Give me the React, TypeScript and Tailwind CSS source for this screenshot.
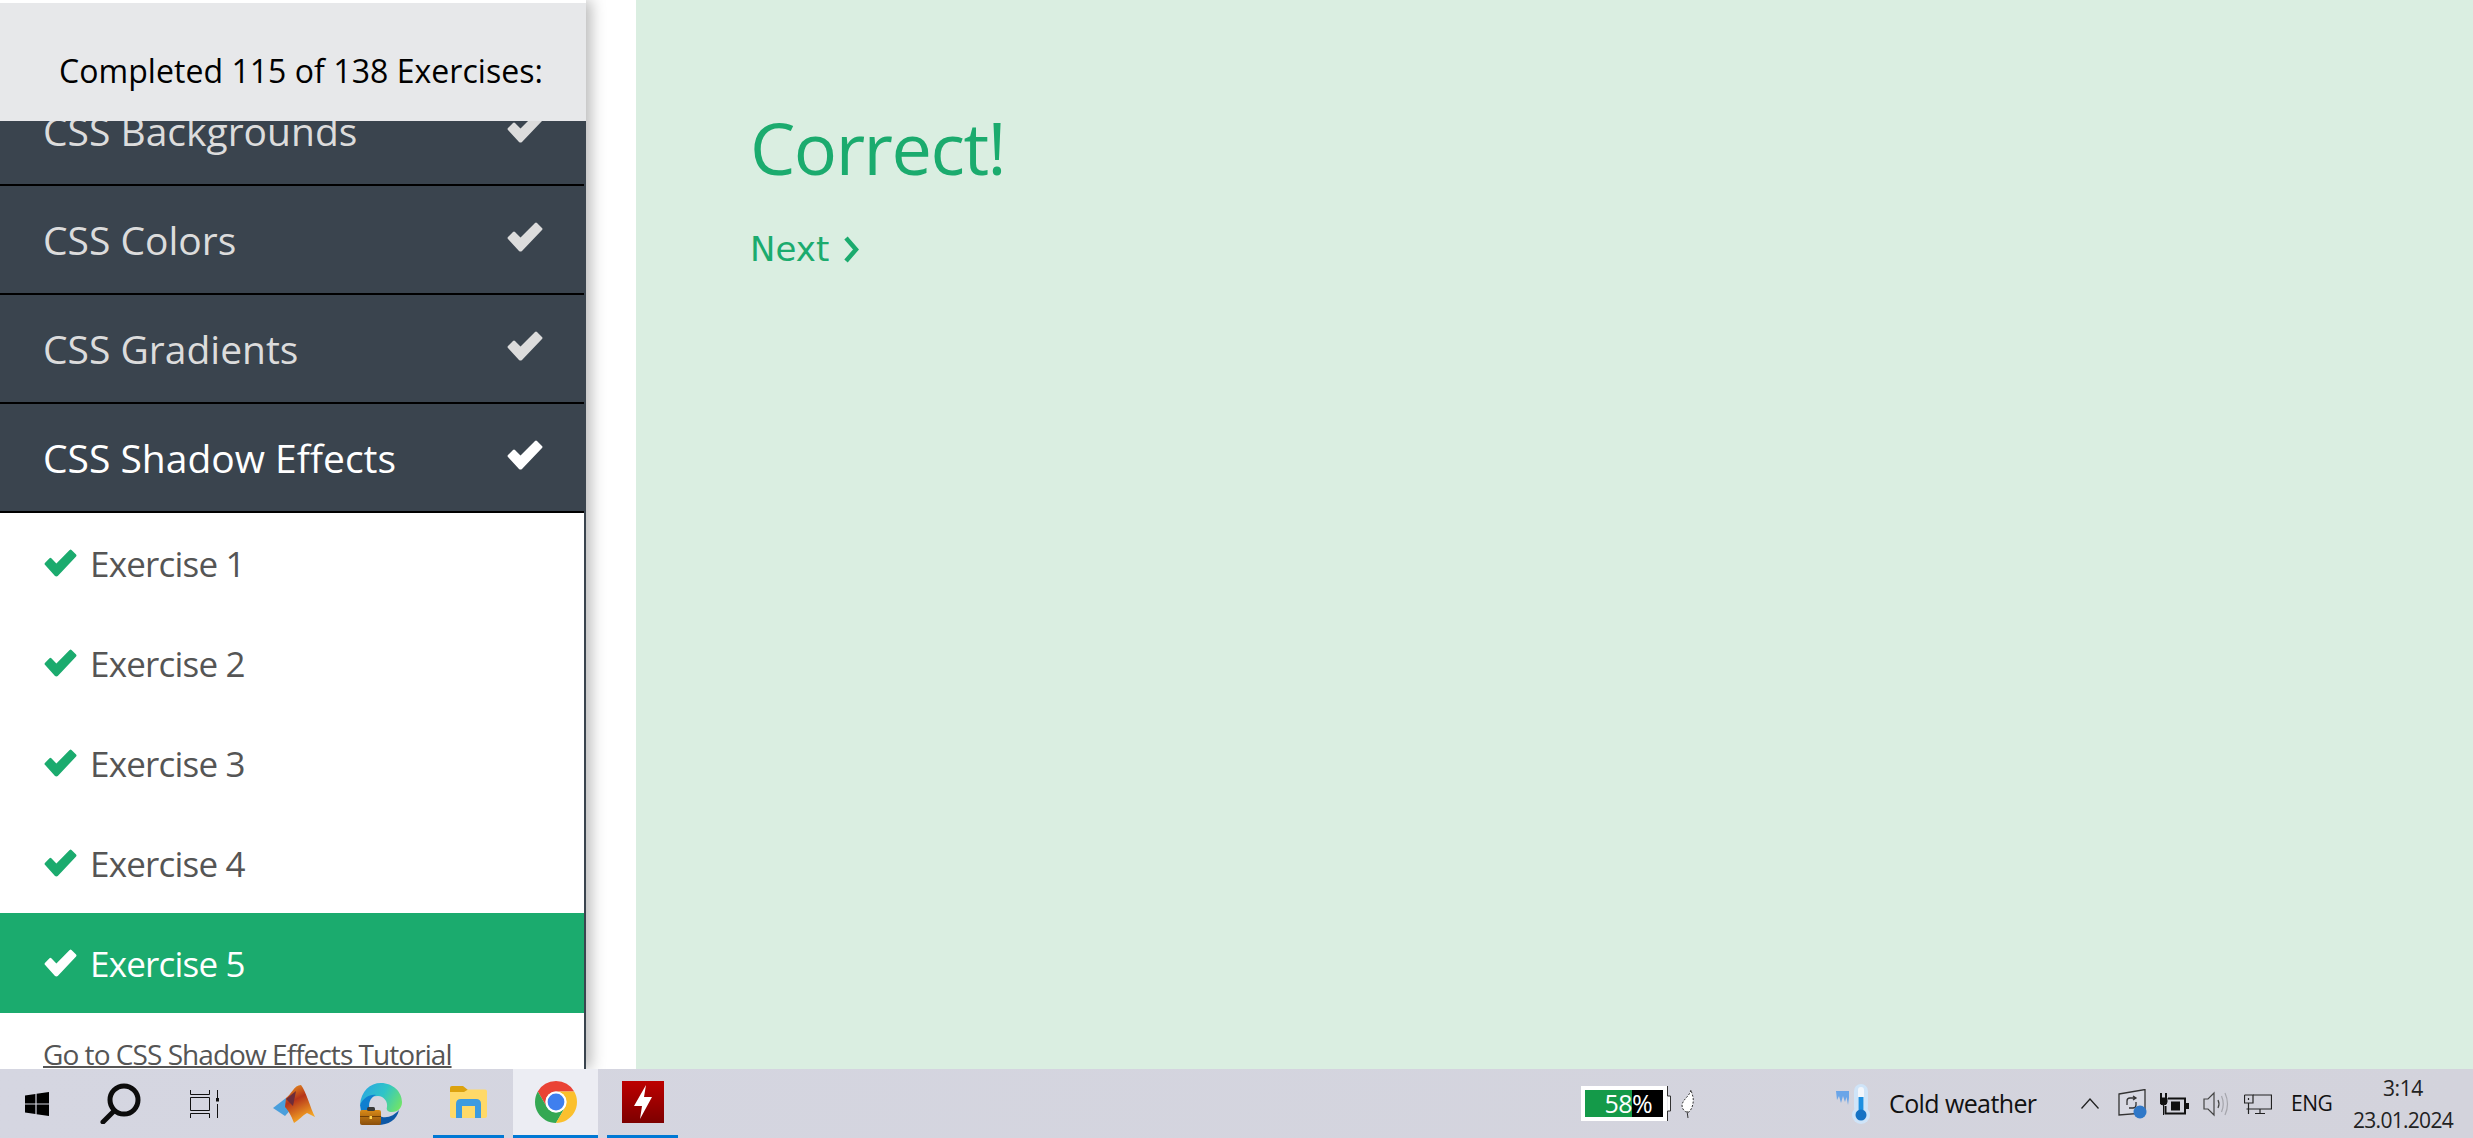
const seg = { fontFamily: '"Open Sans","Noto Sans",sans-serif' };

function Check({ className }: { className: string }) {
  return (
    <svg viewBox="0 0 36 30" preserveAspectRatio="none" fill="currentColor" className={className}>
      <path d="M1 17 Q0 16 1 15 L6 10 Q7 9 8 10 L13.5 15.5 L28 1 Q29 0 30 1 L35 6 Q36 7 35 8 L15 29 Q13.5 30 12 29z" />
    </svg>
  );
}

function Topic({ name, active }: { name: string; active?: boolean }) {
  return (
    <div className="flex h-[109px] items-center justify-between border-b-2 border-black bg-[#3a444e] pl-[43px] pr-[41px]">
      <span className={`text-[39px] leading-none ${active ? "text-white" : "text-[#dcdcdc]"}`}>{name}</span>
      <Check className={`mb-[6px] h-[30px] w-[36px] ${active ? "text-white" : "text-[#dcdcdc]"}`} />
    </div>
  );
}

function Exercise({ n, active }: { n: number; active?: boolean }) {
  return (
    <div className={`flex h-[100px] items-center pl-[44px] ${active ? "bg-[#1bab6e] text-white" : "bg-white text-[#555]"}`}>
      <Check className={`h-[28px] w-[33px] ${active ? "text-white" : "text-[#1bab6e]"}`} />
      <span className="ml-[13px] text-[35px] leading-none tracking-[-0.8px]">Exercise {n}</span>
    </div>
  );
}

function Matlab() {
  return (
    <svg width="42" height="38" viewBox="0 0 42 38">
      <defs>
        <linearGradient id="ml" x1="0" y1="0" x2="0.4" y2="1">
          <stop offset="0" stopColor="#f0a020" />
          <stop offset="0.45" stopColor="#b5341a" />
          <stop offset="1" stopColor="#f5a623" />
        </linearGradient>
      </defs>
      <path d="M0 23 L13 13 L22 20 L12 31z" fill="#4a9fdc" />
      <path d="M13 13 C18 10 21 0 28 0 C33 6 37 22 42 32 L34 28 C30 30 26 35 21 38 C18 30 15 25 12 22z" fill="url(#ml)" />
      <path d="M13 14 L23 6 L20 21z" fill="#6d2c3a" />
    </svg>
  );
}

function Edge() {
  return (
    <svg width="42" height="42" viewBox="0 0 42 42">
      <defs>
        <linearGradient id="eg" x1="0" y1="0.3" x2="1" y2="0.7">
          <stop offset="0" stopColor="#2aa8e0" />
          <stop offset="0.5" stopColor="#2fc4c8" />
          <stop offset="1" stopColor="#6fe36a" />
        </linearGradient>
        <linearGradient id="bc" x1="0" y1="0" x2="0" y2="1">
          <stop offset="0" stopColor="#d98a17" />
          <stop offset="1" stopColor="#8a4f0c" />
        </linearGradient>
      </defs>
      <path d="M0 22 C1 8 10 0 21 0 C33 0 42 9 42 19 C42 25 38 29 32 29 C28 29 26 27 27 24 C28 19 24 13 18 13 C9 13 3 18 0 22z" fill="url(#eg)" />
      <path d="M0 22 C3 15 10 11 16 12 C9 15 8 22 10 28 L1 28z" fill="#0f7fd0" />
      <path d="M18 32 C25 37 34 33 39 27 C37 37 28 42 18 42z" fill="#0d58a6" />
      <rect x="0" y="27" width="21" height="15" rx="2" fill="url(#bc)" />
      <rect x="7" y="24" width="8" height="4" rx="1.5" fill="#3a3a3a" />
      <rect x="0" y="33" width="21" height="1" fill="#6e3f08" />
      <rect x="9.5" y="33" width="2.5" height="3" fill="#ffd34d" />
    </svg>
  );
}

function Explorer() {
  return (
    <svg width="37" height="32" viewBox="0 0 37 32">
      <path d="M0 2 Q0 0 2 0 H13 L18 4 V8 H0z" fill="#dca20e" />
      <path d="M0 6 H14 L18 3.5 H35 Q37 3.5 37 5.5 V30 Q37 32 35 32 H2 Q0 32 0 30z" fill="#ffd968" />
      <path d="M6 32 V18 Q6 13 11 13 H26 Q31 13 31 18 V32 H25 V20 H12 V32z" fill="#3d9be0" />
    </svg>
  );
}

function Chrome() {
  return (
    <svg width="42" height="42" viewBox="4 4 40 40">
      <path d="M24 4A20 20 0 0 1 41.32 14H24A10 10 0 0 0 15.34 29L6.68 14A20 20 0 0 1 24 4z" fill="#ea4335" />
      <path d="M6.68 14A20 20 0 0 0 24 44L32.66 29A10 10 0 0 1 15.34 29z" fill="#34a853" />
      <path d="M41.32 14A20 20 0 0 1 24 44L32.66 29A10 10 0 0 0 24 14z" fill="#fbc02d" />
      <circle cx="24" cy="24" r="10" fill="#fff" />
      <circle cx="24" cy="24" r="8" fill="#3f7fee" />
    </svg>
  );
}

function Flash() {
  return (
    <svg width="42" height="42" viewBox="0 0 42 42">
      <defs>
        <linearGradient id="fl" x1="0" y1="0" x2="0" y2="1">
          <stop offset="0" stopColor="#bd0000" />
          <stop offset="1" stopColor="#7d0000" />
        </linearGradient>
      </defs>
      <rect width="42" height="42" fill="url(#fl)" />
      <path d="M24 4 L12 25 H20 L18 38 L30 16 H22z" fill="#fff" />
    </svg>
  );
}

function Thermo() {
  return (
    <svg width="40" height="40" viewBox="0 0 40 40">
      <path d="M1 7 H14 V14 L13 21 L11.5 13 L10 18 L8 12 L6 19 L4 12 L2 16z" fill="#6aa5e8" />
      <rect x="19" y="0" width="14" height="30" rx="7" fill="#cfe4f8" />
      <circle cx="26" cy="31" r="9" fill="#cfe4f8" />
      <rect x="23" y="3" width="6" height="26" rx="3" fill="#f2f6fb" />
      <rect x="23.5" y="13" width="5" height="17" fill="#1c8fe0" />
      <circle cx="26" cy="31" r="5.5" fill="#1472c4" />
    </svg>
  );
}

export default function App() {
  return (
    <div className="flex h-[1138px] w-[2473px] flex-col overflow-hidden bg-white" style={seg}>
      <div className="flex h-[1069px] min-h-0">
        <aside className="relative z-10 h-full w-[586px] shrink-0 bg-white pt-[3px] shadow-[5px_0_14px_rgba(0,0,0,0.28)]">
          <div className="relative z-10 flex h-[118px] items-center bg-[#e7e8ea] pl-[59px] pt-[18px]">
            <span className="text-[32px] leading-none tracking-[0.05px] text-black">Completed 115 of 138 Exercises:</span>
          </div>
          <div className="-mt-[44px] h-[992px] overflow-hidden border-r-2 border-[#3a444e]">
            <Topic name="CSS Backgrounds" />
            <Topic name="CSS Colors" />
            <Topic name="CSS Gradients" />
            <Topic name="CSS Shadow Effects" active />
            <Exercise n={1} />
            <Exercise n={2} />
            <Exercise n={3} />
            <Exercise n={4} />
            <Exercise n={5} active />
            <div className="pl-[43px] pt-[22px]">
              <span className="text-[28px] leading-[38px] tracking-[-0.95px] text-[#555] underline decoration-2 underline-offset-[1px]">Go to CSS Shadow Effects Tutorial</span>
            </div>
          </div>
        </aside>
        <main className="ml-[50px] flex-1 bg-[#daeee1] pl-[114px] pt-[99px]">
          <h1 className="text-[72px] font-normal leading-[97px] tracking-[-1.5px] text-[#1bab6e]">Correct!</h1>
          <div className="mt-[33px] flex items-center text-[#1bab6e]" style={{ fontFamily: '"DejaVu Sans",sans-serif' }}>
            <span className="text-[34px] leading-[40px]">Next</span>
            <svg className="ml-[15px]" width="15" height="27" viewBox="0 0 15 27">
              <path d="M2 2 L12 13.5 L2 25" fill="none" stroke="currentColor" strokeWidth="4.5" />
            </svg>
          </div>
        </main>
      </div>

      <footer className="relative z-20 flex h-[69px] items-stretch bg-gradient-to-r from-[#d5d6e1] to-[#d3d3dc] text-[#111]">
        <div className="flex w-[90px] items-center pl-[25px]">
          <svg width="24" height="24" viewBox="0 0 24 24">
            <path d="M0 3.4 L10.4 2 V11.4 H0z M11.6 1.8 L24 0 V11.4 H11.6z M0 12.6 H10.4 V22 L0 20.6z M11.6 12.6 H24 V24 L11.6 22.2z" fill="#000" />
          </svg>
        </div>
        <div className="flex w-[90px] items-center pl-[10px]">
          <svg width="41" height="41" viewBox="0 0 41 41">
            <circle cx="24" cy="17" r="14" fill="none" stroke="#0c0c0c" strokeWidth="5" />
            <path d="M14 28 L3 39" stroke="#0c0c0c" strokeWidth="5" strokeLinecap="round" />
          </svg>
        </div>
        <div className="flex w-[93px] items-center pl-[10px]">
          <svg width="30" height="28" viewBox="0 0 30 28">
            <path d="M0.5 0 V4.5 H19.5 V0 M0.5 7.5 H19.5 V20.5 H0.5z M0.5 28 V23.5 H19.5 V28 M27.5 0 V10 M27.5 14 V28" fill="none" stroke="#111" strokeWidth="1" />
            <rect x="26" y="8" width="3" height="3.5" fill="#111" />
          </svg>
        </div>
        <div className="flex w-[87px] items-center">
          <Matlab />
        </div>
        <div className="flex w-[73px] items-center">
          <Edge />
        </div>
        <div className="flex w-[71px] items-center justify-center border-b-[3px] border-[#0078d4]">
          <Explorer />
        </div>
        <div className="ml-[9px] flex w-[85px] items-center justify-center border-b-[3px] border-[#0078d4] bg-[#ecedf3]">
          <Chrome />
        </div>
        <div className="ml-[9px] flex w-[71px] items-center justify-center border-b-[3px] border-[#0078d4]">
          <Flash />
        </div>

        <div className="ml-[903px] flex w-[100px] items-center">
          <div className="flex h-[35px] w-[86px] border-[4px] border-white bg-black text-[25px] leading-[27px] text-white">
            <div className="flex h-full w-[47px] justify-end bg-[#149a49]"><span className="tracking-[-0.5px]">58</span></div>
            <span className="tracking-[-0.5px]">%</span>
          </div>
          <svg width="14" height="35" viewBox="0 0 14 35">
            <path d="M0.5 0 V10 H3.5 V25 H0.5 V35" fill="#fff" stroke="#333" strokeWidth="1" />
          </svg>
        </div>
        <div className="flex w-[154px] items-center">
          <svg width="14" height="30" viewBox="0 0 14 30">
            <path d="M10 1 C8 8 2 10 1 16 C1 22 6 24 8 23 C11 20 13 14 12 8z" fill="#fff" stroke="#333" strokeWidth="1" strokeDasharray="2 1.5" />
            <path d="M6 22 L7 29" stroke="#333" strokeWidth="1" />
          </svg>
        </div>
        <div className="flex w-[246px] items-center">
          <Thermo />
          <span className="ml-[14px] text-[25px] leading-none tracking-[-0.6px]">Cold weather</span>
        </div>
        <div className="flex w-[37px] items-center">
          <svg width="18" height="11" viewBox="0 0 18 11">
            <path d="M0.5 10.5 L9 1 L17.5 10.5" fill="none" stroke="#222" strokeWidth="1.3" />
          </svg>
        </div>
        <div className="flex w-[42px] items-center">
          <svg width="30" height="30" viewBox="0 0 30 30">
            <path d="M1 5 L27 0.5 V24 L1 26z" fill="#d8d9e2" stroke="#333" strokeWidth="1.3" />
            <path d="M9 16 V12 Q9 9 12 9 H17 M15 7 L18 9 L15 11 M18 13 V16 Q18 19 15 19 H11" fill="none" stroke="#333" strokeWidth="1.3" />
            <circle cx="22" cy="23" r="6.5" fill="#2f78c8" />
          </svg>
        </div>
        <div className="flex w-[43px] items-center">
          <svg width="30" height="22" viewBox="0 0 30 22">
            <path d="M1 0 V5 M6 0 V5" stroke="#111" strokeWidth="2" />
            <path d="M0 5 H7 V9 Q7 12 3.5 12 Q0 12 0 9z M3.5 12 V22" fill="#111" stroke="#111" strokeWidth="1" />
            <path d="M8 5.5 H25 V20.5 H5.5 V13" fill="none" stroke="#111" strokeWidth="2" />
            <rect x="11" y="8.5" width="9" height="9" fill="#111" />
            <rect x="26" y="10" width="3" height="6" fill="#111" />
          </svg>
        </div>
        <div className="flex w-[41px] items-center">
          <svg width="27" height="26" viewBox="0 0 27 26">
            <path d="M1 8 H5 L11 2 V24 L5 18 H1z" fill="none" stroke="#444" strokeWidth="1.2" />
            <path d="M15 9 Q17 13 15 17" fill="none" stroke="#444" strokeWidth="1.2" />
            <path d="M18.5 5 Q22 13 18.5 21 M22 2 Q27 13 22 24" fill="none" stroke="#a5a5ac" strokeWidth="1.2" />
          </svg>
        </div>
        <div className="flex w-[47px] items-center">
          <svg width="28" height="20" viewBox="0 0 28 20">
            <path d="M9 1 H27.5 V15 H2.5" fill="none" stroke="#222" strokeWidth="1.2" />
            <path d="M0.5 1 H9 V9 H0.5 V1 M4.5 9 V20 M4.5 4 V6 M11 19.5 H21 M16 15 V19.5" fill="none" stroke="#222" strokeWidth="1.2" />
          </svg>
        </div>
        <div className="flex w-[62px] items-center">
          <span className="text-[21px] leading-none tracking-[-0.5px]">ENG</span>
        </div>
        <div className="flex w-[100px] flex-col items-center justify-center text-[#222]">
          <span className="text-[21px] leading-[32px] tracking-[-0.4px]">3:14</span>
          <span className="text-[21px] leading-[32px] tracking-[-0.7px]">23.01.2024</span>
        </div>
      </footer>
    </div>
  );
}
